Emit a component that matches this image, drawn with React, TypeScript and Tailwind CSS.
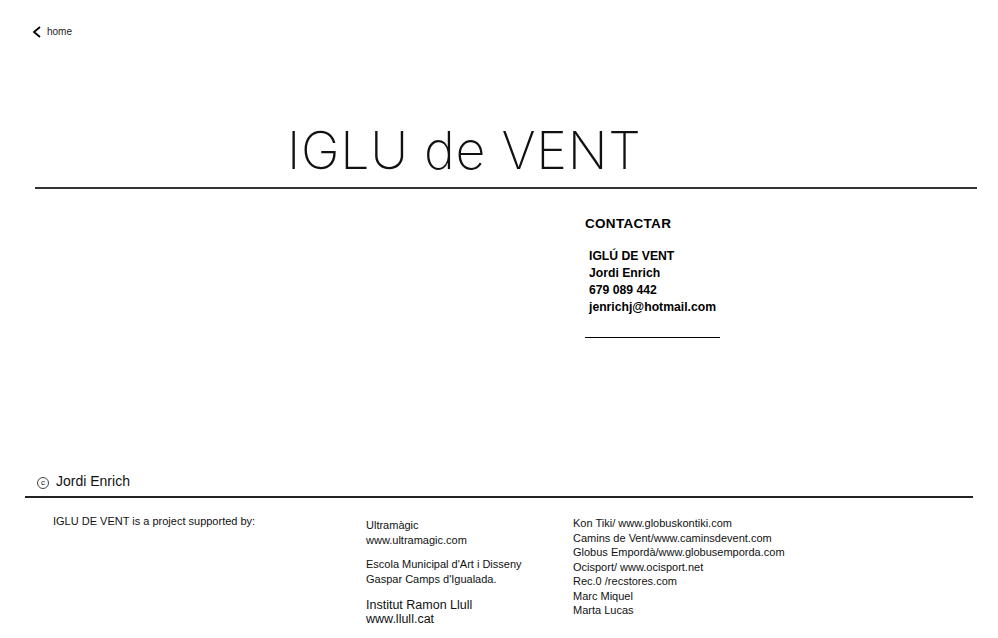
import React from "react";

const sans = "font-['Liberation_Sans',Arial,sans-serif]";

export default function App() {
  return (
    <div className={`w-[998px] h-[638px] bg-white text-black overflow-hidden ${sans}`}>
      {/* back link */}
      <div className="pl-[32px] pt-[26px] h-[40px]">
        <a className="flex items-center gap-[5px] text-[10px] leading-none text-[#222]">
          <svg width="10" height="12" viewBox="0 0 10 12">
            <path d="M8 1 L2 6 L8 11" fill="none" stroke="#000" strokeWidth="1.8" />
          </svg>
          home
        </a>
      </div>

      {/* title */}
      <div className="pl-[287px] pt-[85px] h-[147px]">
        <h1 className="font-['Inter',sans-serif] font-extralight text-[52px] leading-[52px] tracking-[0.7px] text-[#111]">
          IGLU de VENT
        </h1>
      </div>
      <div className="ml-[35px] w-[942px] h-[2px] bg-[#333]" />

      {/* contact */}
      <div className="flex h-[278px]">
        <div className="w-[585px]" />
        <div className="pt-[28px]">
          <h2 className="text-[13.5px] font-bold leading-none tracking-[0.3px]">CONTACTAR</h2>
          <div className="pl-[4px] pt-[17px] text-[12.2px] font-bold leading-[17px]">
            <p>IGLÚ DE VENT</p>
            <p>Jordi Enrich</p>
            <p>679 089 442</p>
            <p>jenrichj@hotmail.com</p>
          </div>
          <div className="mt-[21px] w-[135px] h-px bg-black" />
        </div>
      </div>

      {/* copyright */}
      <div className="flex items-center gap-[7px] pl-[37px] h-[29px] text-[14px] text-[#111]">
        <span className="flex items-center justify-center w-[12px] h-[12px] rounded-full border border-[#444] text-[8px] leading-none mt-[3px]">
          c
        </span>
        <span>Jordi Enrich</span>
      </div>
      <div className="ml-[25px] w-[948px] h-[2px] bg-[#222]" />

      {/* supporters */}
      <div className="flex pt-[16px] text-[11px] leading-[14.5px] text-[#111]">
        <div className="pl-[53px] w-[366px]">IGLU DE VENT is a project supported by:</div>
        <div className="w-[207px] pt-[4px]">
          <p>Ultramàgic</p>
          <p>www.ultramagic.com</p>
          <p className="mt-[10px]">Escola Municipal d'Art i Disseny</p>
          <p>Gaspar Camps d'Igualada.</p>
          <p className="mt-[12px] text-[12.5px] leading-[14px]">Institut Ramon Llull</p>
          <p className="text-[12.5px] leading-[14px]">www.llull.cat</p>
        </div>
        <div className="pt-[2px]">
          <p>Kon Tiki/ www.globuskontiki.com</p>
          <p>Camins de Vent/www.caminsdevent.com</p>
          <p>Globus Empordà/www.globusemporda.com</p>
          <p>Ocisport/ www.ocisport.net</p>
          <p>Rec.0 /recstores.com</p>
          <p>Marc Miquel</p>
          <p>Marta Lucas</p>
        </div>
      </div>
    </div>
  );
}
